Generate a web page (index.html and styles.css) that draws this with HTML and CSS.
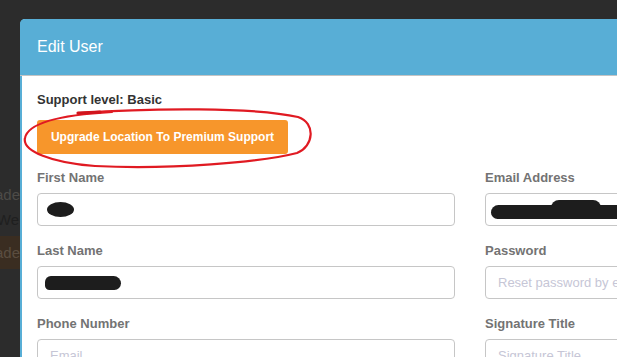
FILE: index.html
```html
<!DOCTYPE html>
<html>
<head>
  <title>Edit User</title>
  <link rel="stylesheet" href="styles.css">
</head>
<body>
  <!-- page behind the modal, mostly hidden -->
  <div class="behind">
    <div class="behind-line behind-faded">Upgrade</div>
    <div class="behind-line behind-dark">We</div>
    <div class="behind-btn">Upgrade</div>
  </div>

  <div class="modal">
    <div class="modal-header">
      <h4 class="modal-title">Edit User</h4>
    </div>
    <div class="modal-body">
      <div class="support-level">Support level: Basic</div>
      <button class="btn-upgrade" type="button">Upgrade Location To Premium Support</button>

      <form class="user-form">
        <div class="form-group">
          <label>First Name</label>
          <div class="form-control"><span class="redact redact-first"></span></div>
        </div>
        <div class="form-group">
          <label>Email Address</label>
          <div class="form-control"><span class="redact redact-email"></span><span class="redact redact-bump"></span></div>
        </div>
        <div class="form-group">
          <label>Last Name</label>
          <div class="form-control"><span class="redact redact-last"></span></div>
        </div>
        <div class="form-group">
          <label for="password">Password</label>
          <input class="form-control" type="password" id="password" placeholder="Reset password by email">
        </div>
        <div class="form-group">
          <label for="phone">Phone Number</label>
          <input class="form-control" type="text" id="phone" placeholder="Email">
        </div>
        <div class="form-group">
          <label for="sig-title">Signature Title</label>
          <input class="form-control" type="text" id="sig-title" placeholder="Signature Title">
        </div>
      </form>
    </div>
  </div>

  <!-- red marker circled round the upgrade button -->
  <svg class="scribble" width="617" height="357" viewBox="0 0 617 357">
    <path d="M 80 113 C 150 108, 255 107, 298 117 C 316 123, 314 146, 297 153 C 262 162, 170 170, 95 166 C 52 163, 22 151, 25 138 C 28 123, 58 115, 112 112" fill="none" stroke="#e01a22" stroke-width="2.2" stroke-linecap="round"/>
    <path d="M 78 113 L 100 112" stroke="#d0141c" stroke-width="3.2" stroke-linecap="round"/>
  </svg>
</body>
</html>
```

FILE: styles.css
```css
body {
  margin: 0;
  background-color: #2c2c2c;
  font-family: "Liberation Sans", Arial, sans-serif;
  overflow: hidden;
  height: 357px;
}

.behind {
  width: 20px;
  padding-top: 184px;
  overflow: hidden;
}
.behind-line,
.behind-btn {
  display: flex;
  justify-content: flex-end;
  white-space: nowrap;
  font-size: 15px;
}
.behind-faded {
  color: #4d4b48;
  height: 22px;
  line-height: 22px;
}
.behind-dark {
  color: #1f1f1f;
  height: 28px;
  line-height: 28px;
  padding-right: 1px;
}
.behind-btn {
  margin-top: 2px;
  height: 33px;
  line-height: 33px;
  background-color: #3a2d21;
  color: #5a4d40;
}

.modal {
  position: absolute;
  left: 20px;
  top: 19px;
  width: 930px;
  height: 400px;
  background-color: #fff;
  border-left: 2px solid #58aed6;
  border-radius: 5px 5px 0 0;
}
.modal-header {
  background-color: #58aed6;
  height: 56px;
  margin-left: -2px;
  border-radius: 5px 0 0 0;
  border-bottom: 1px solid #c4c4c4;
  display: flex;
  align-items: center;
  padding-left: 17px;
}
.modal-title {
  margin: 0;
  color: #fff;
  font-size: 16px;
  font-weight: normal;
}
.modal-body {
  padding: 15px 15px;
}
.support-level {
  font-size: 13px;
  font-weight: bold;
  color: #333;
  line-height: 18px;
}
.btn-upgrade {
  margin-top: 11px;
  height: 34px;
  width: 251px;
  padding: 0;
  border: none;
  border-radius: 3px;
  background-color: #f7962b;
  color: #fff;
  font-family: "Liberation Sans", Arial, sans-serif;
  font-size: 12px;
  font-weight: bold;
}

.user-form {
  margin-top: 15px;
  display: grid;
  grid-template-columns: 418px 418px;
  column-gap: 30px;
}
.form-group {
  margin-bottom: 16px;
}
.form-group label {
  display: block;
  font-size: 13px;
  font-weight: bold;
  color: #737373;
  line-height: 18px;
  margin-bottom: 6px;
}
.form-control {
  box-sizing: border-box;
  display: flex;
  align-items: center;
  width: 100%;
  height: 33px;
  margin: 0;
  padding: 0 12px;
  border: 1px solid #c6c6c6;
  border-radius: 4px;
  background-color: #fff;
  font-family: "Liberation Sans", Arial, sans-serif;
  font-size: 13px;
  color: #555;
}
.form-control::placeholder {
  color: #c6c6d6;
}

.redact {
  display: block;
  flex-shrink: 0;
  background-color: #1d1d1d;
}
.redact-first {
  width: 27px;
  height: 15px;
  margin-left: -3px;
  border-radius: 50%;
}
.redact-last {
  width: 76px;
  height: 14px;
  margin-left: -5px;
  border-radius: 8px 10px 9px 6px;
}
.redact-email {
  width: 140px;
  height: 14px;
  margin-left: -7px;
  margin-top: 4px;
  border-radius: 9px 4px 4px 8px;
}
.redact-bump {
  width: 50px;
  height: 8px;
  margin-left: -80px;
  margin-top: -12px;
  border-radius: 10px 10px 0 0;
}

.scribble {
  position: absolute;
  left: 0;
  top: 0;
  pointer-events: none;
}
```
